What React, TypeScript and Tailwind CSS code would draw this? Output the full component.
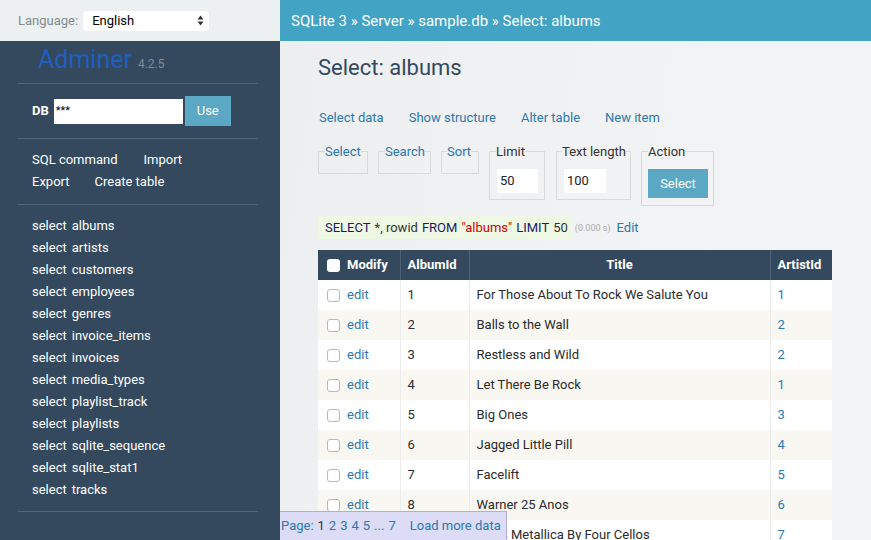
export default function App() {
  const tables = [
    "albums",
    "artists",
    "customers",
    "employees",
    "genres",
    "invoice_items",
    "invoices",
    "media_types",
    "playlist_track",
    "playlists",
    "sqlite_sequence",
    "sqlite_stat1",
    "tracks",
  ];
  const rows: [number, string, number][] = [
    [1, "For Those About To Rock We Salute You", 1],
    [2, "Balls to the Wall", 2],
    [3, "Restless and Wild", 2],
    [4, "Let There Be Rock", 1],
    [5, "Big Ones", 3],
    [6, "Jagged Little Pill", 4],
    [7, "Facelift", 5],
    [8, "Warner 25 Anos", 6],
    [9, "Plays Metallica By Four Cellos", 7],
  ];
  return (
    <div className="relative flex h-[540px] w-[871px] overflow-hidden whitespace-nowrap font-['Roboto','Liberation_Sans',sans-serif] text-[13px] leading-[20px]">
      {/* Sidebar */}
      <aside className="flex w-[280px] shrink-0 flex-col bg-[#34495e] text-white">
        <div className="flex h-[41px] items-center bg-[#ecf0f1] pl-[18px]">
          <span className="text-[#7f8c8d]">Language:</span>
          <div className="ml-[5px] flex h-[20px] w-[126px] items-center justify-between rounded-[4px] bg-white pl-[9px] pr-[5px] text-black">
            <span>English</span>
            <svg width="7" height="11" viewBox="0 0 7 11">
              <path d="M3.5 0.5 L6.5 4.5 L0.5 4.5 Z" fill="#333" />
              <path d="M3.5 10.5 L6.5 6.5 L0.5 6.5 Z" fill="#333" />
            </svg>
          </div>
        </div>
        <div className="mt-[4px] flex h-[30px] items-end pl-[38px]">
          <span className="text-[25px] leading-[30px] text-[#1f5fbf]">Adminer</span>
          <span className="mb-[3px] ml-[6px] text-[12px] leading-[16px] text-[#7d8c9b]">4.2.5</span>
        </div>
        <div className="mx-[18px] mt-[8px] h-px w-[240px] bg-[#536578]" />
        <div className="mt-[12px] flex h-[30px] items-center pl-[32px]">
          <span className="font-bold">DB</span>
          <div className="ml-[5px] flex h-[25px] w-[129px] items-center bg-white pl-[2px] text-[11px] text-black">***</div>
          <div className="ml-[2px] flex h-[30px] w-[46px] items-center justify-center bg-[#5ba8c4] text-white">Use</div>
        </div>
        <div className="mx-[18px] mt-[12px] h-px w-[240px] bg-[#536578]" />
        <div className="mt-[10px] pl-[32px] leading-[22px]">
          <div className="flex">
            <span>SQL command</span>
            <span className="ml-[26px]">Import</span>
          </div>
          <div className="flex">
            <span>Export</span>
            <span className="ml-[25px]">Create table</span>
          </div>
        </div>
        <div className="mx-[18px] mt-[11px] h-px w-[240px] bg-[#536578]" />
        <div className="mt-[10px] pl-[32px] leading-[22px]">
          {tables.map((t) => (
            <div key={t}>
              select<span className="ml-[5px]">{t}</span>
            </div>
          ))}
        </div>
        <div className="mx-[18px] mt-[10px] h-px w-[240px] bg-[#536578]" />
      </aside>

      {/* Main */}
      <main className="flex min-w-0 flex-1 flex-col bg-[linear-gradient(100deg,#eceef0_0%,#f1f2f3_50%,#f3f4f5_100%)]">
        <div className="flex h-[41px] shrink-0 items-center bg-[#42a3c5] pl-[11px] text-[15px] text-white">
          SQLite 3 » Server » sample.db » Select: albums
        </div>
        <div className="pl-[38px]">
          <h2 className="mt-[13px] text-[22px] leading-[28px] text-[#34495e]">Select: albums</h2>
          <div className="mt-[26px] flex gap-[25px] pl-px text-[#2a79b0]">
            <span>Select data</span>
            <span>Show structure</span>
            <span>Alter table</span>
            <span>New item</span>
          </div>

          <div className="mt-[15px] flex items-start">
            <fieldset className="w-[50px] min-w-0 shrink-0 border border-[#d7dadd] px-[6px]">
              <legend className="leading-[17px] text-[#2a79b0]">Select</legend>
              <div className="h-[13px]" />
            </fieldset>
            <fieldset className="ml-[10px] w-[53px] min-w-0 shrink-0 border border-[#d7dadd] px-[6px]">
              <legend className="leading-[17px] text-[#2a79b0]">Search</legend>
              <div className="h-[13px]" />
            </fieldset>
            <fieldset className="ml-[10px] w-[38px] min-w-0 shrink-0 border border-[#d7dadd] px-[5px]">
              <legend className="leading-[17px] text-[#2a79b0]">Sort</legend>
              <div className="h-[13px]" />
            </fieldset>
            <fieldset className="ml-[10px] w-[56px] min-w-0 shrink-0 border border-[#d7dadd] px-[6px] pb-[6px]">
              <legend className="leading-[17px] text-[#333]">Limit</legend>
              <div className="ml-[1px] mt-[9px] flex h-[24px] w-[41px] items-center bg-white pl-[3px] text-[#222]">50</div>
            </fieldset>
            <fieldset className="ml-[11px] w-[75px] min-w-0 shrink-0 border border-[#d7dadd] px-[5px] pb-[6px]">
              <legend className="leading-[17px] text-[#333]">Text length</legend>
              <div className="ml-[2px] mt-[9px] flex h-[24px] w-[42px] items-center bg-white pl-[3px] text-[#222]">100</div>
            </fieldset>
            <fieldset className="ml-[10px] w-[73px] min-w-0 shrink-0 border border-[#d7dadd] px-[6px] pb-[7px]">
              <legend className="leading-[17px] text-[#333]">Action</legend>
              <div className="mt-[9px] flex h-[29px] w-[60px] items-center justify-center bg-[#5ba8c4] text-white">Select</div>
            </fieldset>
          </div>

          <div className="mt-[10px] flex items-center">
            <div className="flex h-[23px] items-center bg-[#eef8e4] pl-[7px] pr-[4px] text-[#333]">
              <span className="text-[#1a1a66]">SELECT</span>
              <span className="ml-[4px]">*, rowid</span>
              <span className="ml-[4px] text-[#1a1a66]">FROM</span>
              <span className="ml-[4px] text-[#d40000]">"albums"</span>
              <span className="ml-[4px] text-[#1a1a66]">LIMIT</span>
              <span className="ml-[4px]">50</span>
            </div>
            <span className="ml-[3px] text-[9px] text-[#aaa]">(0.000 s)</span>
            <span className="ml-[6px] text-[#2a79b0]">Edit</span>
          </div>

          <table className="mt-[11px] w-[514px] table-fixed border-collapse text-[#2b2b2b]">
            <colgroup>
              <col className="w-[82px]" />
              <col className="w-[69px]" />
              <col className="w-[301px]" />
              <col className="w-[62px]" />
            </colgroup>
            <thead>
              <tr className="h-[30px] bg-[#34495e] font-bold text-white">
                <th className="border-r border-[#4d6277] pl-[9px] text-left">
                  <span className="flex items-center">
                    <span className="inline-block h-[13px] w-[13px] rounded-[3px] bg-white" />
                    <span className="ml-[7px]">Modify</span>
                  </span>
                </th>
                <th className="border-r border-[#4d6277] pl-[7px] text-left">AlbumId</th>
                <th className="border-r border-[#4d6277] text-center">Title</th>
                <th className="pl-[7px] text-left">ArtistId</th>
              </tr>
            </thead>
            <tbody>
              {rows.map(([id, title, artist], i) => (
                <tr key={id} className={`h-[30px] ${i % 2 === 0 ? "bg-white" : "bg-[#f8f7f1]"}`}>
                  <td className="border-r border-[#ececec] pl-[9px]">
                    <span className="flex items-center">
                      <span className="inline-block h-[13px] w-[13px] rounded-[3px] border border-[#b9b9b9] bg-white" />
                      <span className="ml-[7px] text-[#2a79b0]">edit</span>
                    </span>
                  </td>
                  <td className="border-r border-[#ececec] pl-[7px]">{id}</td>
                  <td className="border-r border-[#ececec] pl-[7px]">{title}</td>
                  <td className="pl-[7px] text-[#2a79b0]">{artist}</td>
                </tr>
              ))}
            </tbody>
          </table>
        </div>
      </main>

      {/* Sticky pagination footer */}
      <div className="absolute bottom-0 left-[280px] flex h-[29px] w-[227px] items-center border-r border-t border-[#aeaed8] bg-[#dcdcf6] pl-px text-[#2a79b0]">
        <span>Page:</span>
        <span className="ml-[4px] text-[#333]">1</span>
        <span className="ml-[4px]">2</span>
        <span className="ml-[4px]">3</span>
        <span className="ml-[4px]">4</span>
        <span className="ml-[4px]">5</span>
        <span className="ml-[4px]">...</span>
        <span className="ml-[4px]">7</span>
        <span className="ml-[14px]">Load more data</span>
      </div>
    </div>
  );
}
